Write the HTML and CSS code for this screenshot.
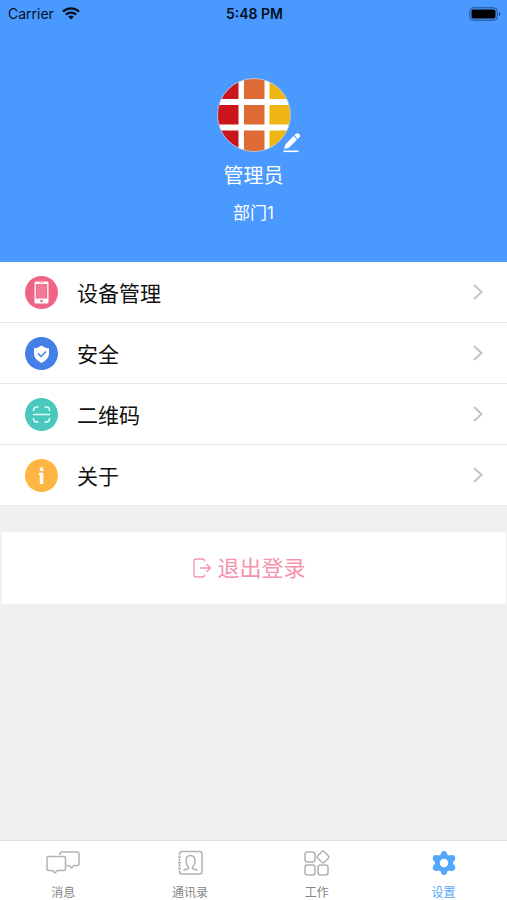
FILE: index.html
```html
<!DOCTYPE html>
<html lang="zh-CN">
<head>
<meta charset="utf-8">
<meta name="viewport" content="width=device-width, initial-scale=1">
<title>设置</title>
<link rel="stylesheet" href="styles.css">
</head>
<body>
<header class="profile">
  <div class="status">
    <div class="carrier">
      <span>Carrier</span>
      <svg width="18" height="13" viewBox="0 0 18 13" fill="none" stroke="#06101f" stroke-width="2.3"><path d="M1 4.6C5.500 0.300 12.500 0.300 17 4.600"/><path d="M3.900 7.700C6.700 5 11.300 5 14.100 7.700"/><path d="M9 12.600 6.200 9.800Q9 7.300 11.800 9.800Z" fill="#06101f" stroke="none"/></svg>
    </div>
    <div class="time">5:48 PM</div>
    <div class="battery">
      <svg width="32" height="14" viewBox="0 0 32 14"><rect x=".8" y=".8" width="27.500" height="12.400" rx="3.500" fill="none" stroke="#234c87" stroke-width="1"/><rect x="2.500" y="2.500" width="24" height="9" rx="1.800" fill="#000"/><path d="M30 5v4q1.500-.5 1.500-2T30 5z" fill="#234c87"/></svg>
    </div>
  </div>
  <button class="avatar" type="button" aria-label="编辑头像">
    <svg width="74" height="74" viewBox="0 0 74 74">
      <defs><clipPath id="disc"><circle cx="37" cy="37" r="36.500"/></clipPath></defs>
      <g clip-path="url(#disc)"><path fill="#fff" d="M0 0h74v74H0z"/><path fill="#c9151b" d="M0 0h21.500v74H0z"/><path fill="#de6b35" d="M27 0h20.500v74H27z"/><path fill="#efb512" d="M52.500 0H74v74H52.500z"/><path fill="#fff" d="M0 21h74v6H0zM0 46.500h74v6H0z"/></g>
      <circle cx="37" cy="37" r="36.500" fill="none" stroke="#b4c4dc" stroke-width=".8"/>
    </svg>
    <svg class="pencil" width="18" height="20" viewBox="0 0 18 20" fill="#fff"><path d="M1 16 2.500 11.300 10.500 3 14 6.500 6 14.700zM11.300 2.300 12.700 1Q14.600-.5 16.300 1.200T16.300 4.500L14.800 5.900z"/><path d="M.5 17.500h15v1.600H.5z"/></svg>
  </button>
  <h1 class="name">管理员</h1>
  <p class="dept">部门1</p>
</header>
<main>
  <nav class="menu" aria-label="设置菜单">
    <a class="row" href="#devices">
      <svg class="badge" viewBox="0 0 33 33"><circle cx="16.500" cy="16.500" r="16.500" fill="#ef6484"/><rect x="9.500" y="5.500" width="14" height="22" rx="1.500" fill="#fff"/><path fill="#ef6484" d="M10.800 8h11.400v14.500H10.800zM14 6.400h5v.7h-5z"/><path fill="#f27a96" d="M11.600 8.600h9.800v13.300h-9.800z"/><circle cx="16.500" cy="25" r="1.300" fill="#ef6484"/></svg>
      <span>设备管理</span>
      <svg class="chevron" viewBox="0 0 10 16"><path d="M1 1l7.500 7L1 15"/></svg>
    </a>
    <a class="row" href="#security">
      <svg class="badge" viewBox="0 0 33 33"><circle cx="16.500" cy="16.500" r="16.500" fill="#437fe6"/><path fill="#fff" d="M16.500 8.500Q20 11.200 24 11.200V17Q23.500 22.500 16.500 26 9.500 22.500 9 17V11.200Q13 11.200 16.500 8.500z"/><path d="M13 16.500l3 3 5-5" fill="none" stroke="#437fe6" stroke-width="1.500"/></svg>
      <span>安全</span>
      <svg class="chevron" viewBox="0 0 10 16"><path d="M1 1l7.500 7L1 15"/></svg>
    </a>
    <a class="row" href="#qrcode">
      <svg class="badge" viewBox="0 0 33 33"><circle cx="16.500" cy="16.500" r="16.500" fill="#4bc8bd"/><path d="M8.500 13v-.5q0-3.500 3.500-3.500h1.500M19.500 9H21q3.500 0 3.500 3.500v.5M24.500 20v.5q0 3.500-3.500 3.500h-1.500M13.500 24H12q-3.500 0-3.500-3.500V20M8 16.500h17" fill="none" stroke="#e5fffb" stroke-width="1.400"/></svg>
      <span>二维码</span>
      <svg class="chevron" viewBox="0 0 10 16"><path d="M1 1l7.500 7L1 15"/></svg>
    </a>
    <a class="row" href="#about">
      <svg class="badge" viewBox="0 0 33 33"><circle cx="16.500" cy="16.500" r="16.500" fill="#ffb543"/><path fill="#fff" d="M14.800 8.500h3.500V12h-3.500zM14 13.800h4.300V25h-3.500v-9H14z"/></svg>
      <span>关于</span>
      <svg class="chevron" viewBox="0 0 10 16"><path d="M1 1l7.500 7L1 15"/></svg>
    </a>
  </nav>
  <button class="logout" type="button">
    <svg width="19" height="20" viewBox="0 0 19 20" fill="none" stroke="currentColor" stroke-width="1.300"><path d="M11.500 3.500V3q0-2-2-2H3Q1 1 1 3v14q0 2 2 2h6.500q2 0 2-2v-.5M7 10h10.500M13.500 6l4 4-4 4"/></svg>
    <span>退出登录</span>
  </button>
</main>
<nav class="tabs" aria-label="主导航">
  <a class="tab" href="#messages">
    <svg width="34" height="26" viewBox="0 0 34 26"><path d="M14 5V3.500q0-1.500 1.500-1.500h16q1.500 0 1.500 1.500V14q0 1.500-1.500 1.500H28L25.500 18 23 15.500h-2.500M2.500 6.500h15.500q1.500 0 1.500 1.500v11q0 1.500-1.500 1.500h-6.500L9 23l-2.500-2.500h-4Q1 20.500 1 19V8q0-1.500 1.500-1.500z"/></svg>
    <span>消息</span>
  </a>
  <a class="tab" href="#contacts">
    <svg width="26" height="26" viewBox="0 0 26 26"><path d="M2.500 5.500V4q0-2.500 2.500-2.500h17.500Q25 1.500 25 4v17.500q0 2.500-2.500 2.500H5q-2.500 0-2.500-2.500V20M2.500 8.500v3M2.500 14v3M1 7h3M1 12.800h3M1 18.500h3"/><path d="M6.500 20.500q1-1.200 4-1.500 1.700-.5.500-2.500-2-2.500-2-5.500 0-5.500 4.500-5.500T18 11q0 3-2 5.500-1.200 2 .5 2.500 3 .3 4 1.500"/></svg>
    <span>通讯录</span>
  </a>
  <a class="tab" href="#work">
    <svg width="26" height="26" viewBox="0 0 26 26"><rect x="1" y="2" width="10" height="10" rx="2.500"/><rect x="1" y="15" width="10" height="10" rx="2.500"/><rect x="14" y="15" width="10" height="10" rx="2.500"/><rect x="14.400" y="2.400" width="9.200" height="9.200" rx="1.500" transform="rotate(45 19 7)"/></svg>
    <span>工作</span>
  </a>
  <a class="tab active" href="#settings" aria-current="page">
    <svg width="26" height="26" viewBox="0 0 26 26"><g class="gear"><path d="M13 2.500 22.100 7.750v10.500L13 23.500 3.900 18.250V7.750z"/><circle cx="13" cy="4" r="3"/><circle cx="20.800" cy="8.500" r="3.400"/><circle cx="20.800" cy="17.500" r="3.400"/><circle cx="13" cy="22" r="3"/><circle cx="5.200" cy="17.500" r="3.400"/><circle cx="5.200" cy="8.500" r="3.400"/></g><circle class="hub" cx="13" cy="13" r="4.200"/></svg>
    <span>设置</span>
  </a>
</nav>
</body>
</html>
```

FILE: styles.css
```css
* {
  box-sizing: border-box;
}

body {
  margin: 0;
  min-height: 100vh;
  display: flex;
  flex-direction: column;
  background: #f0f0f0;
  color: #111;
  font-family: Inter, "Noto Sans CJK SC", sans-serif;
}

a {
  color: inherit;
  text-decoration: none;
}

button {
  border: 0;
  font: inherit;
  cursor: pointer;
}

svg {
  display: block;
  flex: none;
}

.profile {
  display: flex;
  flex-direction: column;
  align-items: center;
  padding-bottom: 37px;
  background: #4999ff;
  color: #fff;
}

.status {
  align-self: stretch;
  display: grid;
  grid-template-columns: 1fr auto 1fr;
  align-items: center;
  height: 27px;
  padding: 0 6px 0 8px;
  color: #06101f;
  font-size: 14px;
  line-height: 20px;
}

.carrier {
  display: flex;
  align-items: center;
  gap: 8px;
}

.time {
  font-weight: 600;
}

.battery {
  justify-self: end;
}

.avatar {
  position: relative;
  margin-top: 51px;
  padding: 0;
  background: none;
}

.pencil {
  position: absolute;
  right: -10px;
  bottom: -1px;
}

.name {
  margin: 9px 0 0;
  font-size: 20px;
  font-weight: 400;
  line-height: 30px;
}

.dept {
  margin: 10px 0 0;
  font-size: 17px;
  line-height: 24px;
}

main {
  flex: 1;
}

.menu {
  background: #fff;
}

.row {
  display: flex;
  align-items: center;
  height: 61px;
  padding: 0 24px 0 25px;
  border-bottom: 1px solid #e9e9e9;
  font-size: 21px;
}

.badge {
  width: 33px;
  height: 33px;
  margin-right: 19px;
}

.chevron {
  width: 10px;
  height: 16px;
  margin-left: auto;
  fill: none;
  stroke: #c4c4c4;
  stroke-width: 2;
}

.logout {
  display: flex;
  align-items: center;
  justify-content: center;
  gap: 5px;
  width: calc(100% - 3px);
  height: 72px;
  margin: 26px 1px 0 2px;
  padding: 0 9px 0 0;
  background: #fff;
  color: #f792ad;
  font-size: 22px;
  line-height: 30px;
}

.tabs {
  display: grid;
  grid-template-columns: repeat(4, 1fr);
  height: 60px;
  border-top: 1px solid #dedede;
  background: #fff;
}

.tab {
  display: flex;
  flex-direction: column;
  align-items: center;
  gap: 8px;
  padding: 9px 0 0;
  color: #858585;
  font-size: 12px;
  line-height: 18px;
}

.tab svg {
  fill: none;
  stroke: #b2b2b2;
  stroke-width: 1.5;
}

.tab.active {
  color: #55a7fa;
}

.tab .gear {
  fill: #55a7fa;
  stroke: none;
}

.tab .hub {
  fill: #fff;
  stroke: none;
}
```
